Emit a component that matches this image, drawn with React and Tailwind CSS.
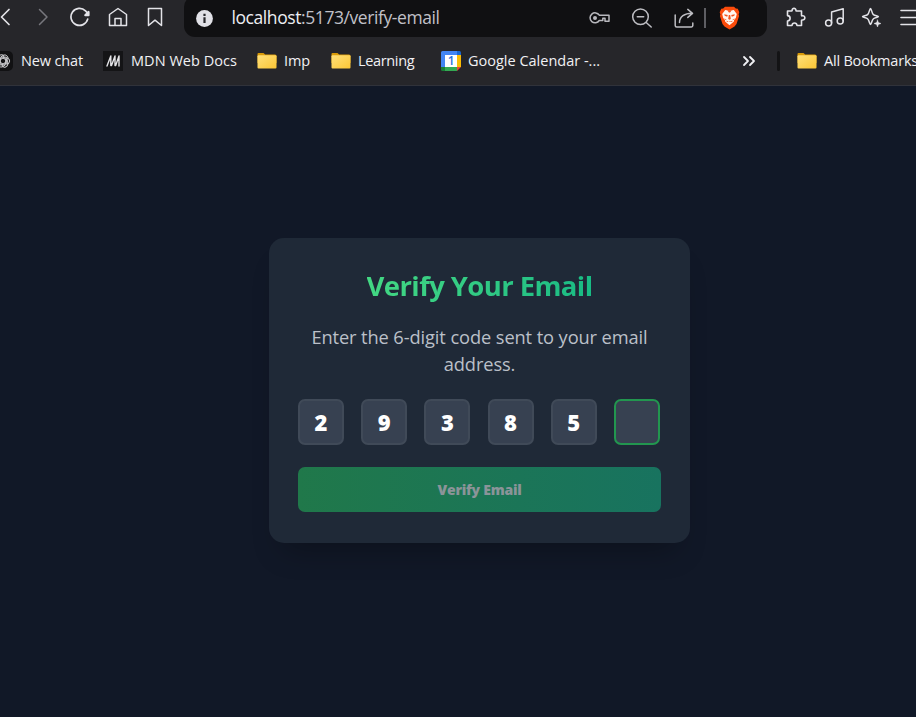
import React from "react";

const Icon = ({ className = "", children, w = 20, h = 20, sw = 1.5 }) => (
  <svg className={`block shrink-0 ${className}`} width={w} height={h} viewBox={`0 0 ${w} ${h}`} fill="none" stroke="currentColor" strokeWidth={sw} strokeLinecap="round" strokeLinejoin="round">
    {children}
  </svg>
);

const Folder = ({ className = "" }) => (
  <svg className={`block shrink-0 ${className}`} width="20" height="16" viewBox="0 0 20 16">
    <defs>
      <linearGradient id="folder" x1="0" y1="0" x2="1" y2="1">
        <stop offset="0" stopColor="#ffe07a" />
        <stop offset="1" stopColor="#fbc635" />
      </linearGradient>
    </defs>
    <path d="M0.5 1a1 1 0 0 1 1-1h5l1.700 1.600H18a1.500 1.500 0 0 1 1.500 1.500V10H.5z" fill="#d99a08" />
    <rect x=".5" y="2.200" width="19" height="13.300" rx="1" fill="url(#folder)" />
  </svg>
);

const Toolbar = () => (
  <div className="flex h-[37px] items-start text-[#e3e3e8]">
    <Icon className="mt-[7px]" w={12} sw={1.7}><path d="M9 2.500 1.500 10 9 17.500" /></Icon>
    <Icon className="ml-[25px] mt-[7px] text-[#77777d]" w={12}><path d="m2.500 2.500 7.500 7.500-7.500 7.500" /></Icon>
    <Icon className="ml-[21px] mt-[7px]" w={22} sw={1.7}>
      <path d="M17.700 12.100A8.500 8.500 0 1 1 15.500 3.900L17.500 6" />
      <path d="M18.500 5v3.200h-3.200z" fill="currentColor" strokeWidth="2.200" />
    </Icon>
    <Icon className="ml-[16px] mt-[7px]"><path d="M1.500 7.500 10 1.500l8.500 6v11h-17zM7 18.500v-7h6v7" /></Icon>
    <Icon className="ml-[19px] mt-[7px]" w={16}><path d="M1.500 1.500h13v17L8 13.200l-6.500 5.300z" /></Icon>
    <div className="-mt-[4px] ml-[20.500px] flex h-[41px] w-[583px] shrink-0 items-center rounded-[11px] bg-[#101012]">
      <svg className="ml-[12px] mt-[3px] shrink-0" width="17" height="17" viewBox="0 0 17 17">
        <circle cx="8.500" cy="8.500" r="8.400" fill="#e1e1e7" />
        <path d="M7.400 3.800h2.200V6H7.400zM7.400 7.200h2.200v5.700H7.400z" fill="#27272b" />
      </svg>
      <span className="ml-[19px] w-[340px] shrink-0 whitespace-nowrap text-[17.5px] leading-6 tracking-[-0.42px] text-[#c1c1c8]">
        <span className="text-[#ededf2]">localhost</span>:5173/verify-email
      </span>
      <Icon className="ml-[17.500px] mt-[2px] text-[#b8b8bd]" w={22}>
        <path d="M10.300 7.200H20v6h-4v-3h-2.200v2.300h-3.500A5 5 0 1 1 10.300 7.200z" />
        <circle cx="6" cy="10" r="2" fill="currentColor" stroke="none" />
      </Icon>
      <Icon className="ml-[20px] mt-[2px] text-[#bdbdc2]" w={22}>
        <circle cx="9.500" cy="8.800" r="7.800" /><path d="m15.200 14.500 5 4.500M6.300 8.800h6.400" />
      </Icon>
      <Icon className="ml-[21px] mt-[2px] text-[#bdbdc2]" w={20}>
        <path d="M1.200 7v10.500a1.500 1.500 0 0 0 1.500 1.500h14.600a1.500 1.500 0 0 0 1.500-1.500V15M5.500 14.500c0-5.800 5-9.200 12.500-9.200M13.800 1.400 18.500 5.400l-4.700 4" />
      </Icon>
      <span className="ml-[10px] mt-[3px] h-5 w-[2px] shrink-0 bg-[#5e5e63]" />
      <svg className="ml-[13px] mt-[3px] shrink-0" width="21" height="24" viewBox="0 0 21 24">
        <path d="M6 .7h9l1.800 1.800 2 .2 1.500 3.500-.7 2.200.5 1.500-2.600 8.200-2 2.300-5 3.100-5-3.100-2-2.300L.9 9.900l.5-1.500-.7-2.200 1.500-3.500 2-.2z" fill="#fb4b0b" />
        <path d="m6.200 4 4.300.8 4.300-.8 3 4-1 4-1.700 2-.2 1.500-2.300 2-2.100 1.800-2.100-1.800-2.300-2-.2-1.500-1.700-2-1-4z" fill="#fff7f1" />
        <path d="m5.200 8.200 3.600.9-.6 1.600-2.500-1zM15.800 8.200l-3.600.9.600 1.600 2.500-1zM8.300 4.300h4.400l-1.600 2.200h-1.200zM9.800 9h1.400l.6 4-1.300.8-1.300-.8zM7.300 14.700l3.200 1 3.200-1-.8 1.300-2.400-.8-2.400.8zM5 12.500l2.300.7-.2 1zM16 12.500l-2.300.7.2 1z" fill="#f25420" />
      </svg>
    </div>
    <Icon className="ml-[18.500px] mt-[7px]" w={22} sw={1.6}>
      <path d="M2.500 4H6.700c.4 0 .5-.4.400-.8C6.900.8 11.100.8 10.900 3.200c0 .4.200.8.600.8h5v4.200c0 .5.400.7.800.6 3.400-.6 3.400 4.600 0 4.200-.5-.1-.8.200-.8.600V18.500h-4.500c-.3-3.300-4.700-3.300-5 0H2.500v-4.500c3.500-.4 3.500-5 0-5.400z" />
    </Icon>
    <Icon className="ml-[17px] mt-[7px]" w={22}>
      <circle cx="4.600" cy="16" r="3" /><circle cx="16.200" cy="14" r="3" />
      <path d="M7.600 16V5L19.200 1.700V14" />
    </Icon>
    <Icon className="ml-[15px] mt-[7px]" w={22}>
      <path d="M9.500 1.500c1 0 1.100 4.600 2.900 6.100 1.500 1.300 5 .9 5 2s-3.500.8-5 2.200c-1.800 1.600-1.900 5.600-2.900 5.600s-1.100-4-2.900-5.600C5.100 10.400 1.500 10.700 1.500 9.600s3.600-.7 5.100-2c1.800-1.500 1.900-6.100 2.900-6.100z" />
      <path d="m16.500 13 .9 2.600 2.600.9-2.600.9-.9 2.600-.9-2.600-2.600-.9 2.600-.9z" fill="currentColor" strokeWidth=".5" />
    </Icon>
    <Icon className="ml-[16.500px] mt-[7px]" w={20} sw={1.6}><path d="M1 3.500h19M1 10.500h19M1 17.500h19" /></Icon>
  </div>
);

const Bookmarks = () => (
  <div className="flex h-[48px] items-center whitespace-nowrap text-[14.5px] text-[#f1f1f4]">
    <div className="-ml-[7px] flex size-5 shrink-0 items-center justify-center rounded-[5px] bg-[#111113]">
      <Icon className="text-[#c9c9cc]" w={16} h={16} sw={1}>
        {[0, 60, 120, 180, 240, 300].map((a) => (
          <path key={a} transform={`rotate(${a} 8 8)`} d="M5.400 9.500V4.300L8.200 2.300a3.200 3.200 0 0 1 4.500 4L8.300 4.200" />
        ))}
      </Icon>
    </div>
    <span className="ml-[8px] w-[62px] shrink-0 tracking-[-0.15px]">New chat</span>
    <div className="ml-[20px] flex size-5 shrink-0 items-center justify-center bg-[#141416]">
      <Icon w={14} h={14} className="text-[#e4e4e7]" sw={1.4}><path d="M1 12 4.800 2v9.500M5.500 11.500 9 2v9.500M9.700 11.500 13 2v10" /></Icon>
    </div>
    <span className="ml-[8px] w-[107px] shrink-0 tracking-[0.04px]">MDN Web Docs</span>
    <Folder className="ml-[19px]" />
    <span className="ml-[7px] w-[27px] shrink-0 tracking-[-0.15px]">Imp</span>
    <Folder className="ml-[20px]" />
    <span className="ml-[7px] w-[57px] shrink-0 tracking-[-0.35px]">Learning</span>
    <svg className="ml-[26px] shrink-0" width="20" height="20" viewBox="0 0 20 20">
      <path d="M1.500 0H16v4H4v12H0V1.500A1.500 1.500 0 0 1 1.500 0z" fill="#4285f4" />
      <path d="M16 0h2.500A1.500 1.500 0 0 1 20 1.500V4h-4z" fill="#1967d2" />
      <path d="M16 4h4v12h-4z" fill="#fbbc04" />
      <path d="M4 16h12v4H4z" fill="#34a853" />
      <path d="M0 16h4v4H1.500A1.500 1.500 0 0 1 0 18.500z" fill="#188038" />
      <path d="M16 16h4l-4 4z" fill="#ea4335" />
      <path d="M4 4h12v12H4z" fill="#fff" />
      <text x="6.800" y="14.300" fontSize="12" fontWeight="600" fontFamily="Open Sans, sans-serif" fill="#2a6fdb">1</text>
    </svg>
    <span className="ml-[7px] w-[133px] shrink-0 tracking-[0px]">Google Calendar -...</span>
    <Icon className="ml-[141px]" w={14} h={12} sw={1.800}><path d="m2 2 4 4-4 4M8 2l4 4-4 4" /></Icon>
    <span className="ml-[21px] h-5 w-[3px] shrink-0 rounded bg-[#131315]" />
    <Folder className="ml-[17px]" />
    <span className="ml-[7px] shrink-0 tracking-[-0.2px]">All Bookmarks</span>
  </div>
);

const digits = ["2", "9", "3", "8", "5", ""];

export default function App() {
  return (
    <div className="flex h-[717px] w-[916px] flex-col overflow-hidden bg-[#111827] font-['Open_Sans','Noto_Sans',sans-serif]">
      <header className="h-[86px] shrink-0 overflow-hidden border-b border-[#30323a] bg-[#26262a]">
        <Toolbar />
        <Bookmarks />
      </header>
      <main className="flex-1 bg-[#111827] pl-[269px] pt-[152px]">
        <section className="h-[305px] w-[421px] rounded-[15px] bg-[#1f2937] px-[29px] pt-[30px] shadow-[0_20px_30px_-14px_rgba(0,0,0,0.3)]">
          <h1 className="text-center text-[27.5px] font-bold leading-[36px]">
            <span className="inline-block bg-gradient-to-r from-[#43d883] to-[#18bb84] bg-clip-text tracking-[-0.6px] text-transparent">Verify Your Email</span>
          </h1>
          <p className="mt-[19px] whitespace-nowrap text-center text-[18.25px] leading-[27px] tracking-[-0.1px] text-[#bbc0c9]">
            Enter the 6-digit code sent to your email<br />address.
          </p>
          <div className="mt-[22px] flex justify-between pr-[1px]">
            {digits.map((d, i) => (
              <div key={i} className={`flex size-[46px] items-center justify-center rounded-[7px] border-2 bg-[#374151] text-[22px] font-extrabold text-white ${i === 5 ? "border-[#22964f]" : "border-[#404a58]"}`}>
                {d}
              </div>
            ))}
          </div>
          <button className="mt-[22px] block h-[45px] w-full rounded-[7px] bg-gradient-to-r from-[#20784a] to-[#18735f] text-[14px] font-extrabold tracking-[-0.25px] text-[#8b9499]">
            Verify Email
          </button>
        </section>
      </main>
    </div>
  );
}
